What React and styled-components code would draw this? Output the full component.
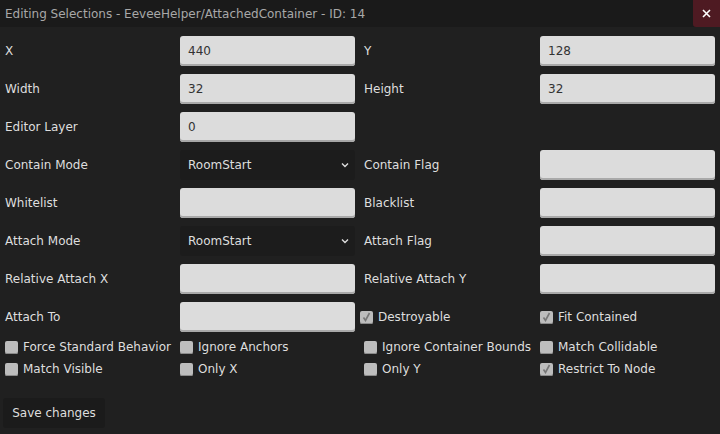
import React from "react";
import styled, { createGlobalStyle } from "styled-components";

const Global = createGlobalStyle`
  html, body { margin: 0; background: #202020; }
  body { font-family: "DejaVu Sans", sans-serif; font-size: 12px; color: #dedede; }
`;
const Win = styled.div`width: 720px; height: 434px; background: #202020; display: flex; flex-direction: column;`;
const Title = styled.div`
  height: 27px; background: #1a1a1a; display: flex; align-items: center; justify-content: space-between;
  padding-left: 5px; color: #a8a8a8; font-size: 12px; margin-bottom: 9px;
`;
const Close = styled.div`
  width: 27px; height: 27px; background: #4e1a22; border-bottom-left-radius: 3px;
  display: flex; align-items: center; justify-content: center;
`;
const Grid = styled.div`
  display: grid; grid-template-columns: 170px 175px 175px 175px; column-gap: 5px; row-gap: 8px;
  padding: 0 5px;
`;
const Label = styled.div`height: 30px; display: flex; align-items: center; padding-left: ${p => p.$i ? 4 : 0}px;`;
const Input = styled.div`
  height: 30px; box-sizing: border-box; background: #dcdcdc; border-radius: 3px;
  box-shadow: inset 0 -2px 0 #a9a9a9; color: #333; display: flex; align-items: center; padding-left: 8px;
`;
const Select = styled.div`
  height: 30px; box-sizing: border-box; background: #1c1c1c; border-radius: 3px; color: #dedede;
  display: flex; align-items: center; justify-content: space-between; padding: 0 6px 0 8px;
`;
const Empty = styled.div``;
const Checks = styled.div`
  display: grid; grid-template-columns: 175px 184px 176px 175px; padding: 0 0 0 5px;
  margin-top: 4px;
`;
const CheckRow = styled.label`height: 22px; display: flex; align-items: center; gap: 5px; white-space: nowrap;`;
const Box = styled.span`
  width: 13px; height: 13px; box-sizing: border-box; border-radius: 2px; background: #bdbdbd;
  box-shadow: inset 0 -1px 0 #8a8a8a; display: inline-flex; align-items: center; justify-content: center;
`;
const Save = styled.div`
  margin: 18px 0 0 3px; width: 102px; height: 30px; background: #1b1b1b; border-radius: 3px;
  display: flex; align-items: center; justify-content: center; color: #dedede;
`;

const Check = ({ on, children, i }) => (
  <CheckRow style={i ? { paddingLeft: 4 } : undefined}>
    <Box>{on && <svg width="9" height="10" viewBox="0 0 9 10"><path d="M1.5 5.5 L3.5 8.5 L7.5 1" stroke="#777" strokeWidth="1.6" fill="none"/></svg>}</Box>
    {children}
  </CheckRow>
);
const Chev = () => <svg width="8" height="6" viewBox="0 0 8 6"><path d="M1 1.5 L4 4.5 L7 1.5" stroke="#ddd" strokeWidth="1.4" fill="none"/></svg>;

export default function App() {
  return (
    <Win>
      <Global />
      <Title>
        Editing Selections - EeveeHelper/AttachedContainer - ID: 14
        <Close><svg width="9" height="9" viewBox="0 0 9 9"><path d="M1 1 L8 8 M8 1 L1 8" stroke="#fff" strokeWidth="1.6"/></svg></Close>
      </Title>
      <Grid>
        <Label>X</Label><Input>440</Input><Label $i>Y</Label><Input>128</Input>
        <Label>Width</Label><Input>32</Input><Label $i>Height</Label><Input>32</Input>
        <Label>Editor Layer</Label><Input>0</Input><Empty /><Empty />
        <Label>Contain Mode</Label><Select>RoomStart<Chev /></Select><Label $i>Contain Flag</Label><Input />
        <Label>Whitelist</Label><Input /><Label $i>Blacklist</Label><Input />
        <Label>Attach Mode</Label><Select>RoomStart<Chev /></Select><Label $i>Attach Flag</Label><Input />
        <Label>Relative Attach X</Label><Input /><Label $i>Relative Attach Y</Label><Input />
        <Label>Attach To</Label><Input />
        <Label><Check on>Destroyable</Check></Label><Label><Check on>Fit Contained</Check></Label>
      </Grid>
      <Checks>
        <Check>Force Standard Behavior</Check><Check>Ignore Anchors</Check><Check>Ignore Container Bounds</Check><Check>Match Collidable</Check>
        <Check>Match Visible</Check><Check>Only X</Check><Check>Only Y</Check><Check on>Restrict To Node</Check>
      </Checks>
      <Save>Save changes</Save>
    </Win>
  );
}
